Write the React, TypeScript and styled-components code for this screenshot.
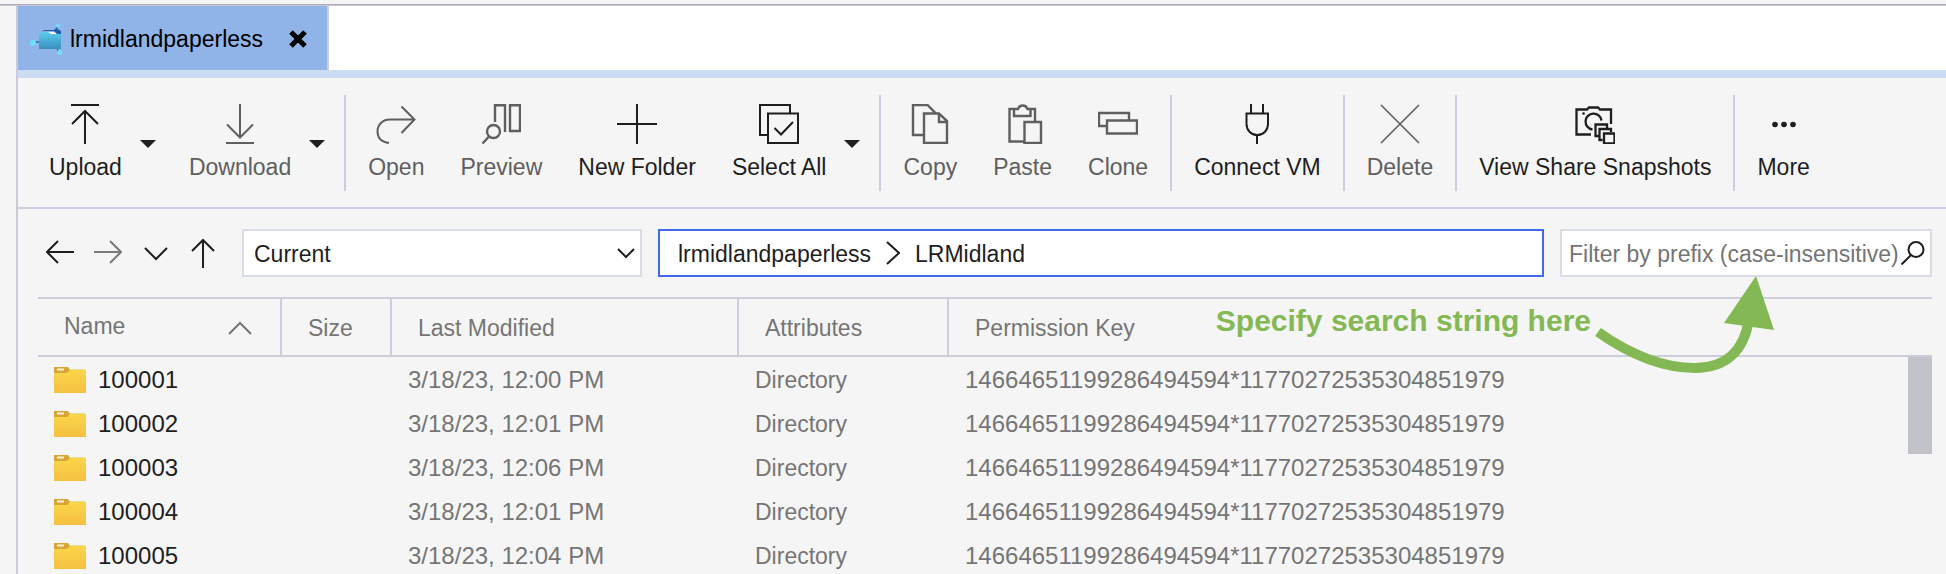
import React from 'react';
import styled, { createGlobalStyle } from 'styled-components';

const line = '#cccedb';
const ink = '#1e1e1e';
const muted = '#5f5f5f';
const soft = '#757575';
const green = '#84b854';

const GlobalStyle = createGlobalStyle`
  * { box-sizing: border-box; }
  body {
    margin: 0;
    background: #f5f5f5;
    color: ${ink};
    font-family: "Liberation Sans", Arial, sans-serif;
    font-size: 23px;
    line-height: 28px;
  }
  button, input, select { font: inherit; color: inherit; }
  button { border: 0; padding: 0; background: none; cursor: pointer; }
  svg { display: block; }
`;

const Window = styled.div`
  display: flex;
  flex-direction: column;
  height: 100vh;
  padding: 4px 0 0 16px;
  overflow: hidden;
  background: linear-gradient(#aaabbd 0 1px, #cbc8d2 1px 2px) 0 4px / 100% 2px no-repeat;
`;

const Panel = styled.main`
  flex: 1;
  min-height: 0;
  display: flex;
  flex-direction: column;
  margin-top: 2px;
  border-left: 2px solid #cbcbd8;
`;

const TabBar = styled.div`
  display: flex;
  height: 72px;
  flex: none;
  background: #ffffff;
  border-bottom: 8px solid #cbdcf3;
`;

const Tab = styled.div`
  display: flex;
  align-items: center;
  padding: 2px 20px 0 12px;
  gap: 8px;
  background: #91b4e8;
  border-right: 2px solid ${line};
  color: #000000;
`;

const TabClose = styled.button`
  margin-left: 18px;
`;

const Toolbar = styled.div`
  display: flex;
  flex: none;
  padding: 17px 0 16px 9px;
  border-bottom: 2px solid ${line};
`;

const ToolGroup = styled.div`
  display: flex;
  height: 96px;
  padding: 0 4px;
  & + & { border-left: 2px solid ${line}; }
`;

const ToolButton = styled.button`
  display: flex;
  flex-direction: column;
  align-items: center;
  gap: 9px;
  padding: 9px 18px 0;
  white-space: nowrap;
  color: ${ink};
  &:disabled { color: ${muted}; }
`;

const CaretButton = styled.button`
  display: flex;
  align-items: center;
  width: 31px;
  padding-top: 2px;
`;

const NavBar = styled.div`
  display: flex;
  flex: none;
  align-items: center;
  gap: 16px;
  padding: 20px 14px 20px 28px;
`;

const NavButtons = styled.div`
  display: flex;
  align-items: center;
  gap: 20px;
  margin-right: 8px;
`;

const NavButton = styled.button`
  color: ${ink};
  &:disabled { color: #7a7a7a; }
`;

const SelectBox = styled.div`
  position: relative;
  flex: none;
  width: 400px;
  svg {
    position: absolute;
    right: 7px;
    top: 18px;
    pointer-events: none;
  }
`;

const Select = styled.select`
  appearance: none;
  width: 100%;
  height: 48px;
  padding: 2px 10px 0;
  border: 2px solid #d9dde5;
  border-radius: 0;
  background: #ffffff;
`;

const PathBox = styled.nav`
  display: flex;
  flex: 1;
  align-items: center;
  gap: 15px;
  height: 48px;
  padding: 0 18px;
  border: 2px solid #4169f0;
  background: #ffffff;
`;

const PathLink = styled.a`
  padding-top: 2px;
  color: ${ink};
  text-decoration: none;
`;

const FilterBox = styled.label`
  display: flex;
  flex: none;
  align-items: center;
  width: 372px;
  height: 48px;
  padding: 0 5px 0 7px;
  border: 2px solid #d9dde5;
  background: #ffffff;
`;

const FilterInput = styled.input`
  flex: 1;
  min-width: 0;
  padding: 2px 0 0;
  border: 0;
  outline: 0;
  background: none;
  &::placeholder { color: ${soft}; opacity: 1; }
`;

const Listing = styled.section`
  position: relative;
  flex: 1;
  min-height: 0;
  margin: 0 14px 0 20px;
`;

const ScrollArea = styled.div`
  height: 100%;
  overflow: hidden;
`;

const ScrollThumb = styled.div`
  position: absolute;
  top: 60px;
  right: 0;
  width: 24px;
  height: 97px;
  background: #c2c3c9;
`;

const Table = styled.table`
  width: 100%;
  table-layout: fixed;
  border-collapse: separate;
  border-spacing: 0;
`;

const HeadCell = styled.th<{ $width?: number }>`
  width: ${(p) => (p.$width ? `${p.$width}px` : 'auto')};
  height: 60px;
  padding: 2px 26px 0;
  border-top: 2px solid ${line};
  border-bottom: 2px solid ${line};
  color: ${soft};
  font-weight: 400;
  text-align: left;
  & + & { border-left: 2px solid ${line}; }
`;

const SortHeadCell = styled(HeadCell)`
  padding: 0 28px 2px 26px;
`;

const SortButton = styled.button`
  display: flex;
  align-items: center;
  justify-content: space-between;
  width: 100%;
  svg { margin-top: 4px; }
`;

const Cell = styled.td`
  height: 44px;
  padding: 2px 18px 0;
  color: ${soft};
  white-space: nowrap;
`;

const NumberCell = styled(Cell)`
  font-size: 24px;
`;

const FileLink = styled.a`
  display: flex;
  align-items: center;
  gap: 12px;
  color: ${ink};
  text-decoration: none;
`;

const NameCell = styled(NumberCell)`
  padding-left: 16px;
`;

const Note = styled.div`
  position: absolute;
  right: 157px;
  top: -22px;
  display: flex;
  align-items: flex-start;
  color: ${green};
  font-size: 30px;
  font-weight: 700;
  line-height: 36px;
  white-space: nowrap;
  pointer-events: none;
  span { margin-top: 28px; }
`;

type IconProps = { children: React.ReactNode; w?: number; h?: number; sw?: number };

const Icon = ({ children, w = 40, h = 40, sw = 2 }: IconProps) => (
  <svg width={w} height={h} viewBox={`0 0 ${w} ${h}`} fill="none" stroke="currentColor" strokeWidth={sw} aria-hidden="true">
    {children}
  </svg>
);

const icons = {
  upload: <path d="M6 1H34M20 40V7M7 20L20 7L33 20" />,
  download: <path d="M6 39H34M20 0V33M7 20.500L20 33.500L33 20.500" />,
  open: <path d="M13 39C6 38 1.500 34 1.500 27.500C1.500 20 7 15.500 14 15.500H38M25.500 2.500L38.500 15.500L25.500 29" />,
  preview: (
    <g strokeWidth="2.400">
      <path d="M14 18V1.200H24V28" />
      <path d="M29 1.200H39V27H29Z" />
      <circle cx="12.500" cy="27.500" r="6.500" />
      <path d="M8 32.500L1.500 39.500" />
    </g>
  ),
  add: <path d="M20 0V40M0 20H40" />,
  selectAll: <path d="M9 31H1V1H31V9M9 9.500H39V39H9ZM15.500 24L22 30.500L34 18" />,
  copy: <path d="M14 31H3V1H17.500L26 9.500M14 9.500H29L37 17V39H14ZM29 9.500V18H37" strokeWidth="2.400" />,
  paste: (
    <path
      d="M20.500 37.500H6.500V5H11M27 5H32V18M11 5V12H27.500V5H24.500A5 5 0 0 0 15 5ZM21.500 18H38V39H21.500Z"
      strokeWidth="2.400"
    />
  ),
  clone: <path d="M8 22H1V9H31V16M9 16.500H39V29.500H9Z" strokeWidth="2.400" />,
  connect: <path d="M14 0V9M26 0V9M9.500 9.500H31V20C31 26.500 26 31 20.200 31C14.500 31 9.500 26.500 9.500 20ZM20 31V40" />,
  remove: <path d="M1 1L39 39M39 1L1 39" strokeWidth="1.600" />,
  snapshot: (
    <g strokeWidth="2.300">
      <path d="M16 30.500H1.500V5.500H12L14 3.500H23L25 5.500H36V20" />
      <path d="M17.500 25.500A8 8 0 1 1 26.500 16.500" />
      <circle cx="8.500" cy="9.500" r="1.300" fill="currentColor" stroke="none" />
      <path d="M23.500 32H20.500V20.500H32V24M27.500 36H24.500V25H36V28M29 29.500H39.500V39.500H29Z" />
    </g>
  ),
  more: (
    <g fill="currentColor" stroke="none">
      <circle cx="11" cy="20.500" r="2.800" />
      <circle cx="20" cy="20.500" r="2.800" />
      <circle cx="29" cy="20.500" r="2.800" />
    </g>
  ),
};

type Tool = { label: string; icon: keyof typeof icons; disabled?: boolean; menu?: boolean };

const groups: Tool[][] = [
  [
    { label: 'Upload', icon: 'upload', menu: true },
    { label: 'Download', icon: 'download', disabled: true, menu: true },
  ],
  [
    { label: 'Open', icon: 'open', disabled: true },
    { label: 'Preview', icon: 'preview', disabled: true },
    { label: 'New Folder', icon: 'add' },
    { label: 'Select All', icon: 'selectAll', menu: true },
  ],
  [
    { label: 'Copy', icon: 'copy', disabled: true },
    { label: 'Paste', icon: 'paste', disabled: true },
    { label: 'Clone', icon: 'clone', disabled: true },
  ],
  [{ label: 'Connect VM', icon: 'connect' }],
  [{ label: 'Delete', icon: 'remove', disabled: true }],
  [{ label: 'View Share Snapshots', icon: 'snapshot' }],
  [{ label: 'More', icon: 'more' }],
];

const key = '14664651199286494594*11770272535304851979';
const rows = [
  { name: '100001', modified: '3/18/23, 12:00 PM' },
  { name: '100002', modified: '3/18/23, 12:01 PM' },
  { name: '100003', modified: '3/18/23, 12:06 PM' },
  { name: '100004', modified: '3/18/23, 12:01 PM' },
  { name: '100005', modified: '3/18/23, 12:04 PM' },
];

const ShareIcon = () => (
  <svg width="32" height="32" viewBox="0 0 32 32" aria-hidden="true">
    <defs>
      <linearGradient id="share" x1="0" y1="0" x2="0" y2="1">
        <stop offset="0" stopColor="#5ccbec" />
        <stop offset="1" stopColor="#3a8fc0" />
      </linearGradient>
    </defs>
    <path d="M3 20L12 18M26 7L28 3M27 25L29 30" stroke="#2a6cc0" strokeWidth="1.500" />
    <path d="M12 9L14 7H24L26 5L31 8V13H12Z" fill="#1f5fb0" />
    <path d="M13 8.500H24L27 11H30V13H12Z" fill="#ffffff" />
    <path d="M9 9H18L21 11H31V26H9Z" fill="url(#share)" />
    <circle cx="3" cy="20" r="3" fill="#6fe0fb" />
    <circle cx="28" cy="2.500" r="2" fill="#6fe0fb" />
    <circle cx="29.500" cy="29.500" r="2.500" fill="#6fe0fb" />
  </svg>
);

const FolderIcon = () => (
  <svg width="32" height="26" viewBox="0 0 32 26" aria-hidden="true">
    <defs>
      <linearGradient id="folder" x1="0" y1="0" x2="0" y2="1">
        <stop offset="0" stopColor="#f9d648" />
        <stop offset="1" stopColor="#f5c042" />
      </linearGradient>
    </defs>
    <path d="M14 2H31V6H14Z" fill="#ecd995" />
    <path d="M0 5H13L16 3H32V26H0Z" fill="url(#folder)" />
    <path d="M0 0H14L16 3L13 6H0Z" fill="#d7a436" />
    <path d="M3 1.500H10V3.500H3Z" fill="#fbf3dc" />
  </svg>
);

export default function App() {
  return (
    <>
      <GlobalStyle />
      <Window>
        <Panel>
          <TabBar>
            <Tab>
              <ShareIcon />
              <span>lrmidlandpaperless</span>
              <TabClose aria-label="Close tab">
                <Icon w={18} h={18} sw={5}>
                  <path d="M2 2L16 16M16 2L2 16" />
                </Icon>
              </TabClose>
            </Tab>
          </TabBar>

          <Toolbar role="toolbar" aria-label="File actions">
            {groups.map((group) => (
              <ToolGroup key={group[0].label}>
                {group.map((tool) => (
                  <React.Fragment key={tool.label}>
                    <ToolButton disabled={tool.disabled}>
                      <Icon>{icons[tool.icon]}</Icon>
                      {tool.label}
                    </ToolButton>
                    {tool.menu && (
                      <CaretButton aria-label={`${tool.label} options`}>
                        <svg width="16" height="8" viewBox="0 0 16 8" aria-hidden="true">
                          <path d="M0 0H16L8 8Z" fill="#1e1e1e" />
                        </svg>
                      </CaretButton>
                    )}
                  </React.Fragment>
                ))}
              </ToolGroup>
            ))}
          </Toolbar>

          <NavBar>
            <NavButtons>
              <NavButton aria-label="Back">
                <Icon w={28} h={30}><path d="M28 14H1M12 3L1 14L12 25" /></Icon>
              </NavButton>
              <NavButton aria-label="Forward" disabled>
                <Icon w={28} h={30}><path d="M0 14H27M16 3L27 14L16 25" /></Icon>
              </NavButton>
              <NavButton aria-label="Recent locations">
                <Icon w={28} h={30}><path d="M3 10L14 21L25 10" /></Icon>
              </NavButton>
              <NavButton aria-label="Parent folder">
                <Icon w={28} h={30}><path d="M13 30V2M2 13L13 2L24 13" /></Icon>
              </NavButton>
            </NavButtons>
            <SelectBox>
              <Select aria-label="Snapshot" defaultValue="current">
                <option value="current">Current</option>
              </Select>
              <Icon w={18} h={12}><path d="M1 2L9 10L17 2" /></Icon>
            </SelectBox>
            <PathBox aria-label="Path">
              <PathLink href="#root">lrmidlandpaperless</PathLink>
              <Icon w={14} h={24}><path d="M1 1L13 12L1 23" /></Icon>
              <PathLink href="#LRMidland">LRMidland</PathLink>
            </PathBox>
            <FilterBox>
              <FilterInput aria-label="Filter" placeholder="Filter by prefix (case-insensitive)" />
              <Icon w={25} h={24}>
                <circle cx="16" cy="8.500" r="7.500" />
                <path d="M11 14L1.500 23.500" />
              </Icon>
            </FilterBox>
          </NavBar>

          <Listing>
            <ScrollArea>
              <Table>
                <thead>
                  <tr>
                    <SortHeadCell $width={242}>
                      <SortButton>
                        Name
                        <Icon w={24} h={14}><path d="M1 13L12 2L23 13" /></Icon>
                      </SortButton>
                    </SortHeadCell>
                    <HeadCell $width={110}>Size</HeadCell>
                    <HeadCell $width={347}>Last Modified</HeadCell>
                    <HeadCell $width={210}>Attributes</HeadCell>
                    <HeadCell>Permission Key</HeadCell>
                  </tr>
                </thead>
                <tbody>
                  {rows.map((row) => (
                    <tr key={row.name}>
                      <NameCell>
                        <FileLink href={`#${row.name}`}>
                          <FolderIcon />
                          {row.name}
                        </FileLink>
                      </NameCell>
                      <Cell />
                      <NumberCell>{row.modified}</NumberCell>
                      <Cell>Directory</Cell>
                      <NumberCell>{key}</NumberCell>
                    </tr>
                  ))}
                </tbody>
              </Table>
            </ScrollArea>
            <ScrollThumb />
            <Note>
              <span>Specify search string here</span>
              <svg width="184" height="102" viewBox="0 0 184 102" aria-hidden="true">
                <path d="M7 57C44 83 78 93 104 93C134 93 153 77 158 44" fill="none" stroke={green} strokeWidth="10" />
                <path d="M165 1L183 55L133 48Z" fill={green} />
              </svg>
            </Note>
          </Listing>
        </Panel>
      </Window>
    </>
  );
}
